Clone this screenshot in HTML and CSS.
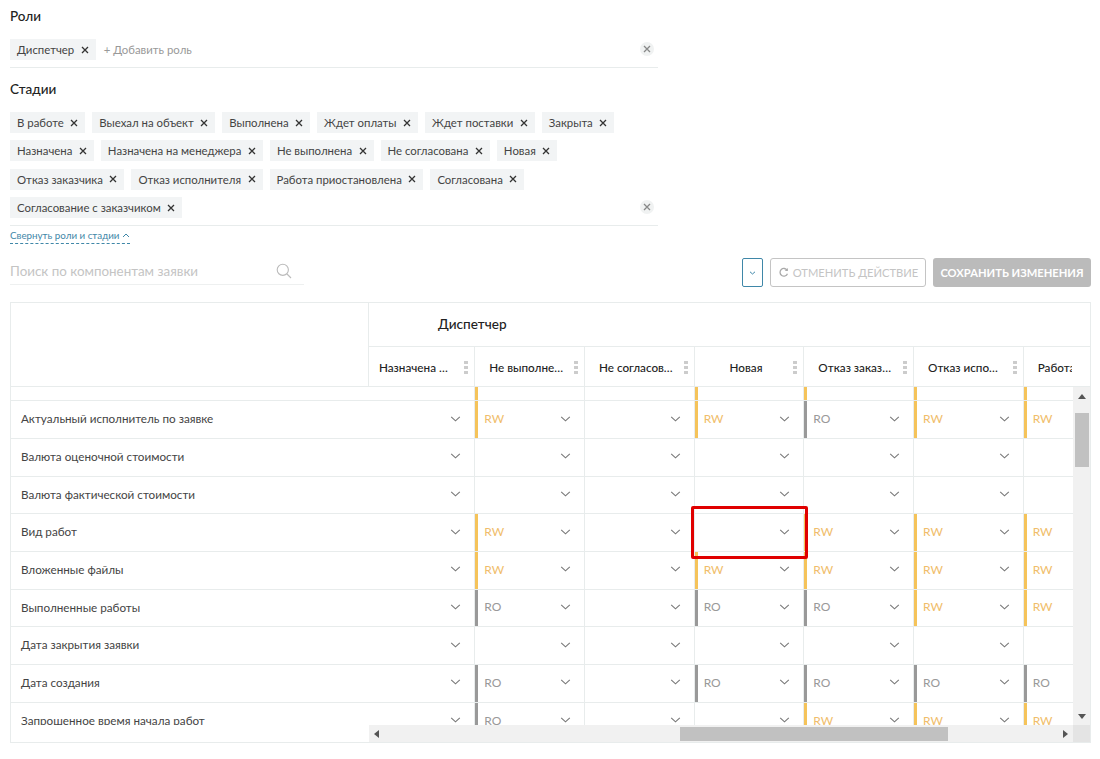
FILE: index.html
```html
<!DOCTYPE html>
<html lang="ru">
<head>
    <meta charset="UTF-8">
    <title>Настройка прав</title>
    <link rel="stylesheet" href="styles.css">
</head>
<body>
    <svg class="sprite" width="0" height="0">
        <symbol id="chev" viewBox="0 0 11 6"><path d="M1.2 .8 5.5 4.8 9.8 .8" fill="none" stroke="#777" stroke-width="1.1"/></symbol>
        <symbol id="cross" viewBox="0 0 8 8"><path d="M1 1 7 7M7 1 1 7" fill="none" stroke="#333" stroke-width="1.3"/></symbol>
    </svg>

    <section class="picker">
        <h2 class="picker-title">Роли</h2>
        <div class="tag-input">
            <div class="tags">
                <span class="tag">Диспетчер<svg class="tag-x"><use href="#cross"/></svg></span>
                <span class="tag-add">+ Добавить роль</span>
            </div>
            <span class="clear"><svg><use href="#cross"/></svg></span>
        </div>
    </section>

    <section class="picker picker-stages">
        <h2 class="picker-title">Стадии</h2>
        <div class="tag-input">
            <div class="tags">
                <span class="tag">В работе<svg class="tag-x"><use href="#cross"/></svg></span>
                <span class="tag">Выехал на объект<svg class="tag-x"><use href="#cross"/></svg></span>
                <span class="tag">Выполнена<svg class="tag-x"><use href="#cross"/></svg></span>
                <span class="tag">Ждет оплаты<svg class="tag-x"><use href="#cross"/></svg></span>
                <span class="tag">Ждет поставки<svg class="tag-x"><use href="#cross"/></svg></span>
                <span class="tag">Закрыта<svg class="tag-x"><use href="#cross"/></svg></span>
                <span class="tag">Назначена<svg class="tag-x"><use href="#cross"/></svg></span>
                <span class="tag">Назначена на менеджера<svg class="tag-x"><use href="#cross"/></svg></span>
                <span class="tag">Не выполнена<svg class="tag-x"><use href="#cross"/></svg></span>
                <span class="tag">Не согласована<svg class="tag-x"><use href="#cross"/></svg></span>
                <span class="tag">Новая<svg class="tag-x"><use href="#cross"/></svg></span>
                <span class="tag">Отказ заказчика<svg class="tag-x"><use href="#cross"/></svg></span>
                <span class="tag">Отказ исполнителя<svg class="tag-x"><use href="#cross"/></svg></span>
                <span class="tag">Работа приостановлена<svg class="tag-x"><use href="#cross"/></svg></span>
                <span class="tag">Согласована<svg class="tag-x"><use href="#cross"/></svg></span>
                <span class="tag">Согласование с заказчиком<svg class="tag-x"><use href="#cross"/></svg></span>
            </div>
            <span class="clear"><svg><use href="#cross"/></svg></span>
        </div>
    </section>

    <a class="collapse" href="#">Свернуть роли и стадии<svg viewBox="0 0 8 5"><path d="M1 4 4 1 7 4" fill="none" stroke="#3f87a8" stroke-width="1"/></svg></a>

    <div class="toolbar">
        <div class="search">
            <span>Поиск по компонентам заявки</span>
            <svg viewBox="0 0 16 16"><circle cx="6.8" cy="6.8" r="5.6" fill="none" stroke="#bbb" stroke-width="1.1"/><path d="m11 11 4 4" stroke="#bbb" stroke-width="1.1"/></svg>
        </div>
        <div class="actions">
            <button class="btn btn-more"><svg viewBox="0 0 7 4"><path d="M1 .8 3.5 3 6 .8" fill="none" stroke="#3f87a8" stroke-width="1"/></svg></button>
            <button class="btn btn-undo"><svg viewBox="0 0 12 12"><path d="M10 3.6A4.2 4.2 0 1 0 10.3 7.4" fill="none" stroke="#aaa" stroke-width="1.4"/><path d="M10.8 1v3.4H7.4z" fill="#aaa"/></svg>ОТМЕНИТЬ ДЕЙСТВИЕ</button>
            <button class="btn btn-save">СОХРАНИТЬ ИЗМЕНЕНИЯ</button>
        </div>
    </div>

    <div class="matrix">
        <div class="matrix-head">
            <div class="corner"></div>
            <div class="head-main">
                <div class="role-name">Диспетчер</div>
                <div class="stage-row">
                    <div class="stage first"><span>Назначена на менеджера</span><i class="dots"></i></div>
                    <div class="stage"><span>Не выполнена</span><i class="dots"></i></div>
                    <div class="stage"><span>Не согласована</span><i class="dots"></i></div>
                    <div class="stage"><span>Новая</span><i class="dots"></i></div>
                    <div class="stage"><span>Отказ заказчика</span><i class="dots"></i></div>
                    <div class="stage"><span>Отказ исполнителя</span><i class="dots"></i></div>
                    <div class="stage"><span>Работа приостановлена</span><i class="dots"></i></div>
                </div>
            </div>
        </div>

        <div class="matrix-body">
            <div class="names">
                <div class="names-view">
                    <div class="name partial"></div>
                    <div class="name">Актуальный исполнитель по заявке</div>
                    <div class="name">Валюта оценочной стоимости</div>
                    <div class="name">Валюта фактической стоимости</div>
                    <div class="name">Вид работ</div>
                    <div class="name">Вложенные файлы</div>
                    <div class="name">Выполненные работы</div>
                    <div class="name">Дата закрытия заявки</div>
                    <div class="name">Дата создания</div>
                    <div class="name">Запрошенное время начала работ</div>
                </div>
            </div>
            <div class="grid-wrap">
                <div class="grid-top">
                    <div class="grid-view">
                        <div class="row partial">
                            <div class="cell first"></div><div class="cell rw"></div><div class="cell"></div><div class="cell rw"></div><div class="cell rw"></div><div class="cell rw"></div><div class="cell rw"></div>
                        </div>
                        <div class="row">
                            <div class="cell first"><svg class="chev"><use href="#chev"/></svg></div>
                            <div class="cell rw">RW<svg class="chev"><use href="#chev"/></svg></div>
                            <div class="cell"><svg class="chev"><use href="#chev"/></svg></div>
                            <div class="cell rw">RW<svg class="chev"><use href="#chev"/></svg></div>
                            <div class="cell ro">RO<svg class="chev"><use href="#chev"/></svg></div>
                            <div class="cell rw">RW<svg class="chev"><use href="#chev"/></svg></div>
                            <div class="cell rw">RW<svg class="chev"><use href="#chev"/></svg></div>
                        </div>
                        <div class="row">
                            <div class="cell first"><svg class="chev"><use href="#chev"/></svg></div>
                            <div class="cell"><svg class="chev"><use href="#chev"/></svg></div>
                            <div class="cell"><svg class="chev"><use href="#chev"/></svg></div>
                            <div class="cell"><svg class="chev"><use href="#chev"/></svg></div>
                            <div class="cell"><svg class="chev"><use href="#chev"/></svg></div>
                            <div class="cell"><svg class="chev"><use href="#chev"/></svg></div>
                            <div class="cell"></div>
                        </div>
                        <div class="row">
                            <div class="cell first"><svg class="chev"><use href="#chev"/></svg></div>
                            <div class="cell"><svg class="chev"><use href="#chev"/></svg></div>
                            <div class="cell"><svg class="chev"><use href="#chev"/></svg></div>
                            <div class="cell"><svg class="chev"><use href="#chev"/></svg></div>
                            <div class="cell"><svg class="chev"><use href="#chev"/></svg></div>
                            <div class="cell"><svg class="chev"><use href="#chev"/></svg></div>
                            <div class="cell"></div>
                        </div>
                        <div class="row">
                            <div class="cell first"><svg class="chev"><use href="#chev"/></svg></div>
                            <div class="cell rw">RW<svg class="chev"><use href="#chev"/></svg></div>
                            <div class="cell"><svg class="chev"><use href="#chev"/></svg></div>
                            <div class="cell"><svg class="chev"><use href="#chev"/></svg></div>
                            <div class="cell rw">RW<svg class="chev"><use href="#chev"/></svg></div>
                            <div class="cell rw">RW<svg class="chev"><use href="#chev"/></svg></div>
                            <div class="cell rw">RW<svg class="chev"><use href="#chev"/></svg></div>
                        </div>
                        <div class="row">
                            <div class="cell first"><svg class="chev"><use href="#chev"/></svg></div>
                            <div class="cell rw">RW<svg class="chev"><use href="#chev"/></svg></div>
                            <div class="cell"><svg class="chev"><use href="#chev"/></svg></div>
                            <div class="cell rw">RW<svg class="chev"><use href="#chev"/></svg></div>
                            <div class="cell rw">RW<svg class="chev"><use href="#chev"/></svg></div>
                            <div class="cell rw">RW<svg class="chev"><use href="#chev"/></svg></div>
                            <div class="cell rw">RW<svg class="chev"><use href="#chev"/></svg></div>
                        </div>
                        <div class="row">
                            <div class="cell first"><svg class="chev"><use href="#chev"/></svg></div>
                            <div class="cell ro">RO<svg class="chev"><use href="#chev"/></svg></div>
                            <div class="cell"><svg class="chev"><use href="#chev"/></svg></div>
                            <div class="cell ro">RO<svg class="chev"><use href="#chev"/></svg></div>
                            <div class="cell ro">RO<svg class="chev"><use href="#chev"/></svg></div>
                            <div class="cell rw">RW<svg class="chev"><use href="#chev"/></svg></div>
                            <div class="cell rw">RW<svg class="chev"><use href="#chev"/></svg></div>
                        </div>
                        <div class="row">
                            <div class="cell first"><svg class="chev"><use href="#chev"/></svg></div>
                            <div class="cell"><svg class="chev"><use href="#chev"/></svg></div>
                            <div class="cell"><svg class="chev"><use href="#chev"/></svg></div>
                            <div class="cell"><svg class="chev"><use href="#chev"/></svg></div>
                            <div class="cell"><svg class="chev"><use href="#chev"/></svg></div>
                            <div class="cell"><svg class="chev"><use href="#chev"/></svg></div>
                            <div class="cell"></div>
                        </div>
                        <div class="row">
                            <div class="cell first"><svg class="chev"><use href="#chev"/></svg></div>
                            <div class="cell ro">RO<svg class="chev"><use href="#chev"/></svg></div>
                            <div class="cell"><svg class="chev"><use href="#chev"/></svg></div>
                            <div class="cell ro">RO<svg class="chev"><use href="#chev"/></svg></div>
                            <div class="cell ro">RO<svg class="chev"><use href="#chev"/></svg></div>
                            <div class="cell ro">RO<svg class="chev"><use href="#chev"/></svg></div>
                            <div class="cell ro">RO<svg class="chev"><use href="#chev"/></svg></div>
                        </div>
                        <div class="row">
                            <div class="cell first"><svg class="chev"><use href="#chev"/></svg></div>
                            <div class="cell ro">RO<svg class="chev"><use href="#chev"/></svg></div>
                            <div class="cell"><svg class="chev"><use href="#chev"/></svg></div>
                            <div class="cell"><svg class="chev"><use href="#chev"/></svg></div>
                            <div class="cell rw">RW<svg class="chev"><use href="#chev"/></svg></div>
                            <div class="cell rw">RW<svg class="chev"><use href="#chev"/></svg></div>
                            <div class="cell rw">RW<svg class="chev"><use href="#chev"/></svg></div>
                        </div>
                    </div>
                    <div class="vscroll">
                        <i class="arrow up"></i>
                        <i class="vthumb"></i>
                        <i class="arrow down"></i>
                    </div>
                </div>
                <div class="hscroll">
                    <i class="arrow left"></i>
                    <i class="hthumb"></i>
                    <i class="arrow right"></i>
                    <i class="scroll-corner"></i>
                </div>
            </div>
        </div>
        <div class="highlight"></div>
    </div>
</body>
</html>
```

FILE: styles.css
```css
* {
    margin: 0;
    padding: 0;
    box-sizing: border-box;
}

body {
    font-family: "Lato", "Open Sans", sans-serif;
    font-size: 11.4px;
    color: #444;
    background: white;
    padding: 0 9px 0 10px;
    height: 759px;
    overflow: hidden;
}

.sprite {
    position: absolute;
}

/* roles and stages */
.picker {
    width: 648px;
    padding-top: 8px;
}

.picker-stages {
    padding-top: 13px;
}

.picker-title {
    font-size: 13.5px;
    font-weight: 500;
    line-height: 17px;
    color: #222;
    margin-bottom: 14px;
}

.tag-input {
    display: flex;
    border-bottom: 1px solid #e8ecec;
    padding-bottom: 7px;
}

.tags {
    flex: 1;
    display: flex;
    flex-wrap: wrap;
    gap: 7.4px 7px;
    align-items: center;
}

.tag {
    display: flex;
    align-items: center;
    height: 21px;
    padding: 0 7px;
    background: #f2f4f5;
    color: #444;
    white-space: nowrap;
}

.tag-x {
    width: 8px;
    height: 8px;
    margin-left: 6.5px;
}

.tag-add {
    color: #999;
    margin-left: 1px;
}

.clear {
    align-self: flex-end;
    width: 14px;
    height: 14px;
    margin: 0 4px 4px 0;
    border-radius: 50%;
    background: #f0f2f2;
    display: flex;
    align-items: center;
    justify-content: center;
}

.clear svg {
    width: 8px;
    height: 8px;
    opacity: .55;
}

.collapse {
    display: inline-flex;
    align-items: center;
    gap: 3px;
    margin-top: 3px;
    height: 15px;
    padding-bottom: 2px;
    font-size: 9.8px;
    color: #3f87a8;
    text-decoration: none;
    border-bottom: 1px dashed #3f87a8;
}

.collapse svg {
    width: 8px;
    height: 5px;
}

/* search and buttons */
.toolbar {
    display: flex;
    justify-content: space-between;
    margin-top: 14px;
    height: 29px;
}

.search {
    width: 294px;
    height: 27px;
    padding: 0 12px 1px 0;
    border-bottom: 1px solid #eef0f0;
    display: flex;
    align-items: center;
    justify-content: space-between;
    color: #c4c4c4;
    font-size: 13.4px;
}

.search svg {
    width: 16px;
    height: 16px;
}

.actions {
    display: flex;
    gap: 7px;
}

.btn {
    font-family: inherit;
    font-size: 11.2px;
    height: 29px;
    border-radius: 3px;
    display: flex;
    align-items: center;
    justify-content: center;
    background: white;
    cursor: pointer;
}

.btn-more {
    width: 21px;
    border: 1px solid #3f87a8;
    border-radius: 2px;
}

.btn-more svg {
    width: 7px;
    height: 4px;
}

.btn-undo {
    width: 156px;
    border: 1px solid #c4c4c4;
    color: #c4c4c4;
    gap: 4px;
}

.btn-undo svg {
    width: 11px;
    height: 11px;
}

.btn-save {
    width: 158px;
    border: none;
    background: #bbb;
    color: white;
    font-weight: 700;
}

/* matrix */
.matrix {
    position: relative;
    width: 1081px;
    margin-top: 15px;
    border: 1px solid #e8ecec;
}

.matrix-head {
    display: flex;
    height: 84px;
    border-bottom: 1px solid #e8ecec;
}

.corner {
    width: 358px;
    flex: none;
    border-right: 1px solid #e8ecec;
}

.head-main {
    flex: 1;
    min-width: 0;
}

.role-name {
    height: 44px;
    line-height: 43px;
    padding-left: 69px;
    font-size: 13.6px;
    font-weight: 500;
    color: #222;
    border-bottom: 1px solid #e8ecec;
}

.stage-row {
    display: flex;
    width: 703px;
    height: 39px;
    overflow: hidden;
}

.stage {
    flex: none;
    width: 109.7px;
    display: flex;
    align-items: center;
    justify-content: center;
    padding: 0 6px 0 14px;
    gap: 10px;
    border-left: 1px solid #e8ecec;
    font-size: 11.7px;
    font-weight: 500;
    color: #222;
}

.stage.first {
    width: 105.3px;
    border-left: none;
    padding-left: 10px;
}

.stage span {
    flex: 1;
    min-width: 0;
    text-align: center;
    white-space: nowrap;
    overflow: hidden;
    text-overflow: ellipsis;
}

.dots {
    flex: none;
    width: 4px;
    height: 14px;
    background: radial-gradient(circle, #ccc 1.8px, transparent 2px) 0 0 / 4px 5px;
}

.matrix-body {
    display: flex;
    height: 355px;
}

.names {
    width: 358px;
    flex: none;
}

.names-view {
    height: 338px;
    overflow: hidden;
}

.name {
    height: 37.7px;
    line-height: 34px;
    padding-left: 10px;
    border-bottom: 1px solid #e8ecec;
    font-size: 11.7px;
}

.name.partial,
.row.partial {
    height: 14px;
}

.grid-wrap {
    flex: 1;
    min-width: 0;
    display: flex;
    flex-direction: column;
}

.grid-top {
    display: flex;
    height: 338px;
}

.grid-view {
    width: 704px;
    overflow: hidden;
    flex: none;
}

.row {
    display: flex;
    height: 37.7px;
}

.cell {
    flex: none;
    width: 109.7px;
    position: relative;
    display: flex;
    align-items: center;
    padding: 0 0 2px 9px;
    border-left: 1px solid #e8ecec;
    border-bottom: 1px solid #e8ecec;
    font-size: 12px;
    color: #999;
}

.cell.first {
    width: 105.3px;
    border-left: none;
}

.cell.rw {
    box-shadow: inset 3px 0 0 #f5c35a;
    color: #f0bd6a;
}

.cell.ro {
    box-shadow: inset 3px 0 0 #999;
    color: #999;
}

.chev {
    position: absolute;
    right: 13px;
    top: 50%;
    margin-top: -4px;
    width: 11px;
    height: 6px;
}

/* scrollbars */
.vscroll {
    flex: 1;
    background: #f1f1f1;
    display: flex;
    flex-direction: column;
    align-items: center;
    padding: 7px 0 6px;
}

.vthumb {
    width: 14px;
    height: 54px;
    margin-top: 14px;
    background: #c1c1c1;
}

.hscroll {
    height: 17px;
    background: #f1f1f1;
    display: flex;
    align-items: center;
    padding-left: 5px;
}

.hthumb {
    width: 268px;
    height: 14px;
    margin-left: 301px;
    background: #c1c1c1;
}

.arrow {
    width: 0;
    height: 0;
    border: 4px solid transparent;
}

.arrow.up {
    border-top: none;
    border-bottom: 5px solid #555;
}

.arrow.down {
    margin-top: auto;
    border-bottom: none;
    border-top: 5px solid #555;
}

.arrow.left {
    border-left: none;
    border-right: 5px solid #555;
}

.arrow.right {
    margin-left: auto;
    margin-right: 5px;
    border-right: none;
    border-left: 5px solid #555;
}

.scroll-corner {
    width: 17px;
    height: 17px;
    background: #e4e4e4;
}

.highlight {
    position: absolute;
    left: 680px;
    top: 203px;
    width: 117px;
    height: 53px;
    border: 3px solid #e00000;
    border-radius: 2px;
}
```
